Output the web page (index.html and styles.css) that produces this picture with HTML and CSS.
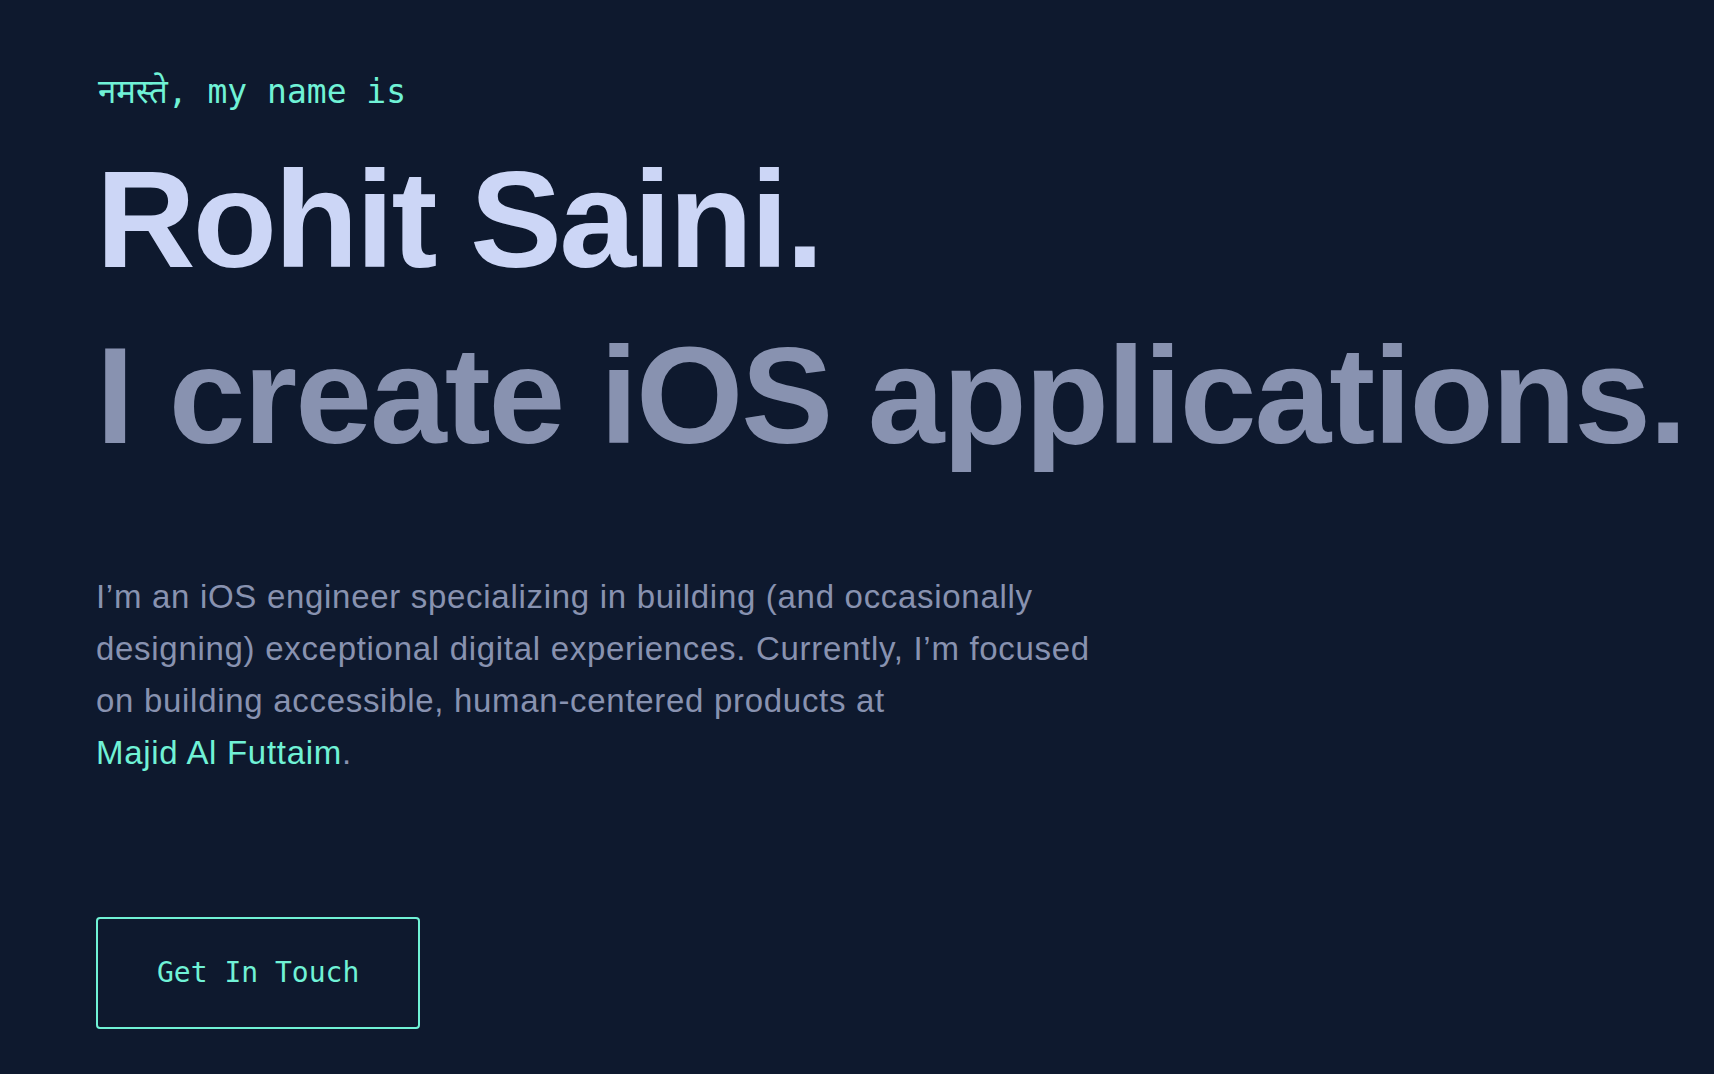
FILE: index.html
```html
<!DOCTYPE html>
<html lang="en">
<head>
<meta charset="utf-8">
<title>Rohit Saini</title>
<link rel="stylesheet" href="styles.css">
</head>
<body>
<main class="hero">
  <p class="greeting">नमस्ते, my name is</p>
  <h1 class="name">Rohit Saini.</h1>
  <h2 class="tagline">I create iOS applications.</h2>
  <p class="intro">I’m an iOS engineer specializing in building (and occasionally designing) exceptional digital experiences. Currently, I’m focused on building accessible, human-centered products at <a class="link" href="#">Majid Al Futtaim</a>.</p>
  <a class="button" href="#">Get In Touch</a>
</main>
</body>
</html>
```
FILE: styles.css
```css
html, body {
  margin: 0;
  padding: 0;
  background: #0e192e;
}
body {
  min-height: 1074px;
}
.hero {
  display: flex;
  flex-direction: column;
  align-items: flex-start;
  padding: 75px 0 0 96px;
}
.greeting {
  margin: 0 0 0 2px;
  font-family: "DejaVu Sans Mono", "Noto Sans", monospace;
  font-size: 33px;
  line-height: 33px;
  color: #70f2d6;
}
.name, .tagline {
  margin: 0;
  font-family: "Liberation Sans", Arial, sans-serif;
  font-weight: 700;
  font-size: 138px;
  line-height: 138px;
  letter-spacing: -2px;
  white-space: nowrap;
}
.name {
  margin-top: 42px;
  letter-spacing: -2.8px;
  color: #ccd6f6;
}
.tagline {
  margin-top: 38px;
  color: #8892b0;
}
.intro {
  margin: 107px 0 0;
  max-width: 1010px;
  font-family: "Liberation Sans", Arial, sans-serif;
  font-size: 33px;
  line-height: 52px;
  letter-spacing: 0.7px;
  color: #8892b0;
}
.link {
  display: inline-block;
  color: #70f2d6;
  text-decoration: none;
}
.button {
  margin-top: 138px;
  display: block;
  padding: 40px 59px;
  border: 2px solid #70f2d6;
  border-radius: 4px;
  font-family: "DejaVu Sans Mono", monospace;
  font-size: 28px;
  line-height: 28px;
  color: #70f2d6;
  text-decoration: none;
}
```
